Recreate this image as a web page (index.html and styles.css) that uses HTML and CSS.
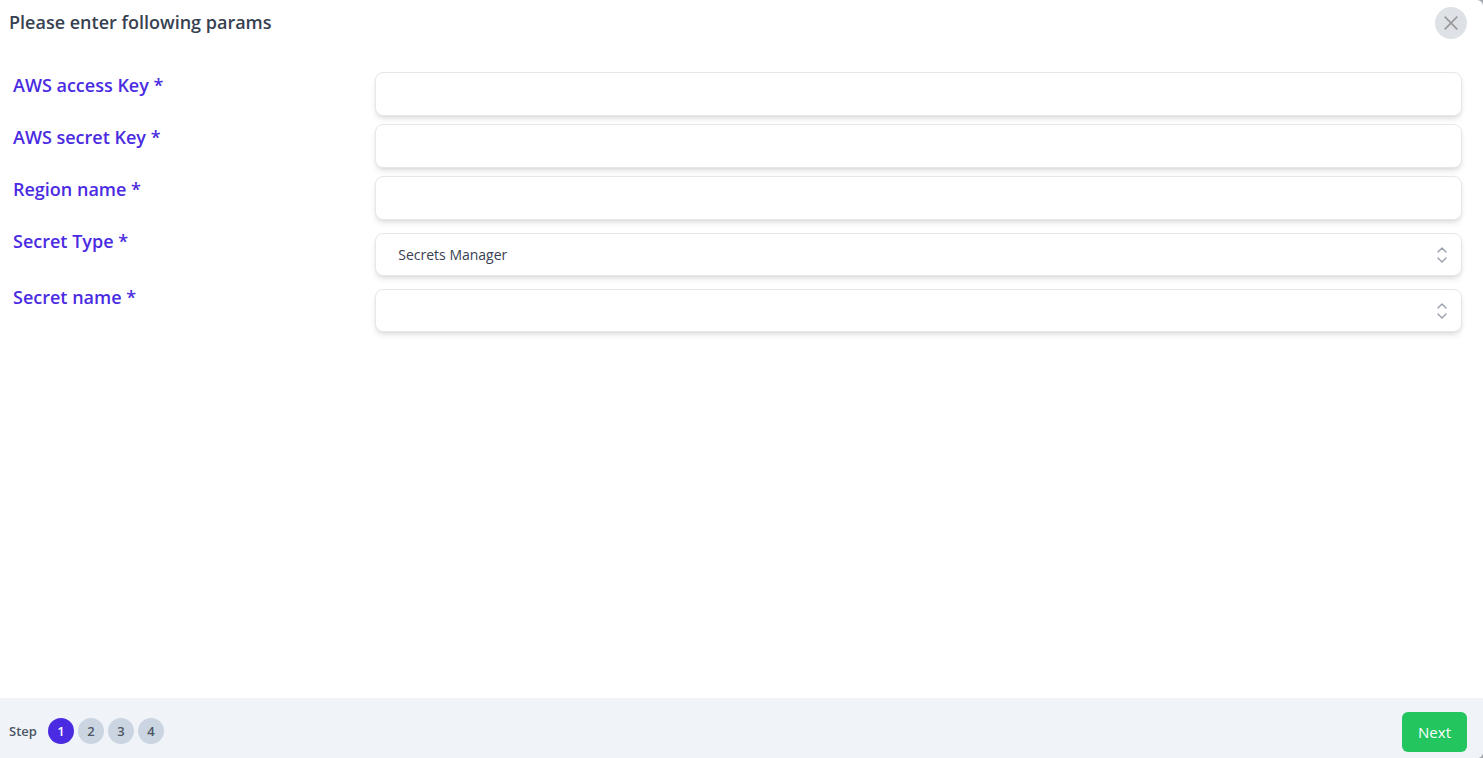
FILE: index.html
```html
<!DOCTYPE html>
<html lang="en">
<head>
    <meta charset="UTF-8">
    <meta name="viewport" content="width=device-width, initial-scale=1.0">
    <title>Secret params</title>
    <link rel="stylesheet" href="styles.css">
</head>
<body>

    <form class="modal">
        <!-- Header -->
        <header class="modal-header">
            <h1 class="modal-title">Please enter following params</h1>
            <button type="button" class="close-btn" aria-label="Close">
                <svg width="16" height="16" viewBox="0 0 16 16" fill="none" stroke="#999" stroke-width="1.7">
                    <path d="M1.7 1.7L14.3 14.3M14.3 1.7L1.7 14.3"/>
                </svg>
            </button>
        </header>

        <!-- Fields -->
        <main class="modal-body">
            <div class="row">
                <label class="label" for="access-key">AWS access Key *</label>
                <div class="field"><input class="control" type="text" id="access-key"></div>
            </div>
            <div class="row">
                <label class="label" for="secret-key">AWS secret Key *</label>
                <div class="field"><input class="control" type="text" id="secret-key"></div>
            </div>
            <div class="row">
                <label class="label" for="region">Region name *</label>
                <div class="field"><input class="control" type="text" id="region"></div>
            </div>
            <div class="row">
                <label class="label" for="secret-type">Secret Type *</label>
                <div class="field field-select">
                    <select class="control" id="secret-type">
                        <option>Secrets Manager</option>
                    </select>
                    <svg class="selector" width="20" height="20" viewBox="0 0 20 20" fill="none" stroke="#9ca3af" stroke-width="1.5" stroke-linecap="round" stroke-linejoin="round">
                        <path d="M6 7L10 3L14 7M6 13L10 17L14 13"/>
                    </svg>
                </div>
            </div>
            <div class="row">
                <label class="label" for="secret-name">Secret name *</label>
                <div class="field field-select">
                    <select class="control" id="secret-name">
                        <option></option>
                    </select>
                    <svg class="selector" width="20" height="20" viewBox="0 0 20 20" fill="none" stroke="#9ca3af" stroke-width="1.5" stroke-linecap="round" stroke-linejoin="round">
                        <path d="M6 7L10 3L14 7M6 13L10 17L14 13"/>
                    </svg>
                </div>
            </div>
        </main>

        <!-- Steps -->
        <footer class="modal-footer">
            <div class="steps">
                <span class="steps-label">Step</span>
                <span class="step active">1</span>
                <span class="step">2</span>
                <span class="step">3</span>
                <span class="step">4</span>
            </div>
            <button type="button" class="next-btn">Next</button>
        </footer>
    </form>

</body>
</html>
```
FILE: styles.css
```css
* {
    box-sizing: border-box;
}

body {
    margin: 0;
    background-color: #a3a8ae;
    color: #374151;
    font-family: "Open Sans", sans-serif;
}

.modal {
    display: flex;
    flex-direction: column;
    min-height: 100vh;
    background-color: white;
    border-radius: 0 6px 6px 0;
    overflow: hidden;
}

.modal-header {
    display: flex;
    justify-content: space-between;
    align-items: flex-start;
    padding: 7px 16px 7px 9px;
}

.modal-title {
    margin: 0;
    font-size: 18px;
    font-weight: 600;
    line-height: 30px;
}

.close-btn {
    display: flex;
    align-items: center;
    justify-content: center;
    width: 32px;
    height: 32px;
    padding: 0;
    border: none;
    border-radius: 50%;
    background-color: #dee2e6;
    cursor: pointer;
}

.modal-body {
    display: flex;
    flex-direction: column;
    flex: 1;
    gap: 8px;
    padding: 26px 21px 26px 13px;
}

.row {
    display: flex;
}

.label {
    width: 25%;
    color: #4a2be2;
    font-size: 18px;
    font-weight: 600;
    line-height: 26px;
}

.field {
    position: relative;
    flex: 1;
}

.field-select {
    padding-top: 5px;
}

.control {
    display: block;
    width: 100%;
    height: 44px;
    padding: 0 40px 0 22px;
    border: 1px solid #e5e7eb;
    border-radius: 8px;
    background-color: white;
    box-shadow: 0 4px 6px -1px rgba(0, 0, 0, 0.1), 0 2px 4px -2px rgba(0, 0, 0, 0.1);
    color: #374151;
    font-family: inherit;
    font-size: 14px;
    appearance: none;
}

.field-select .control {
    height: 43px;
}

.selector {
    position: absolute;
    right: 10px;
    bottom: 11px;
    pointer-events: none;
}

.modal-footer {
    display: flex;
    justify-content: space-between;
    align-items: center;
    padding: 14px 16px 6px 9px;
    background-color: #f0f4f9;
}

.steps {
    display: flex;
    align-items: center;
    gap: 4px;
    padding-bottom: 2px;
    color: #4b5563;
    font-size: 13px;
    font-weight: 600;
}

.steps-label {
    margin-right: 7px;
}

.step {
    width: 26px;
    border-radius: 50%;
    background-color: #cbd5e1;
    line-height: 26px;
    text-align: center;
}

.step.active {
    background-color: #4a2be2;
    color: white;
}

.next-btn {
    height: 40px;
    padding: 0 16px;
    border: none;
    border-radius: 6px;
    background-color: #22c55e;
    color: white;
    font-family: inherit;
    font-size: 15px;
    cursor: pointer;
}
```
